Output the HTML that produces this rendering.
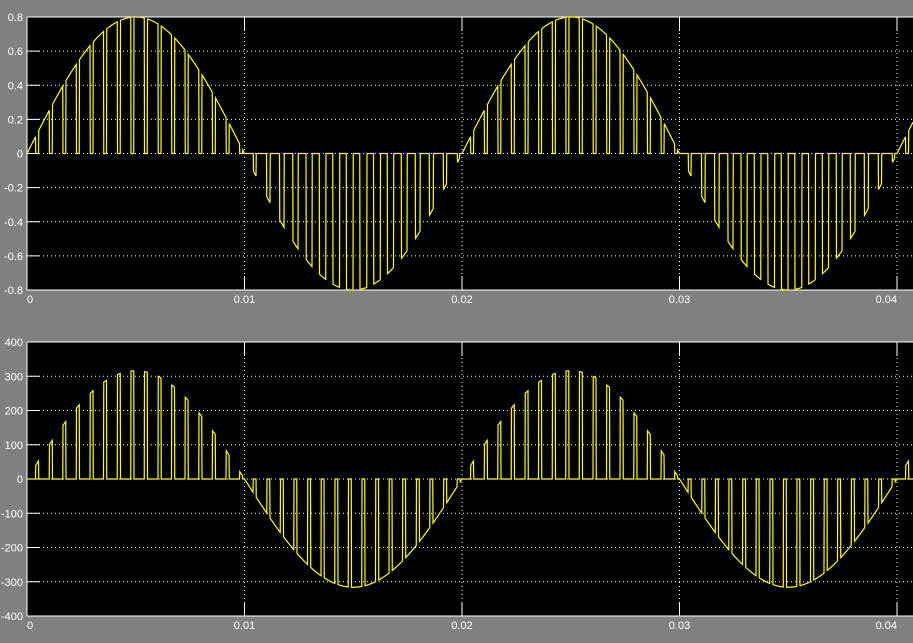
<!DOCTYPE html>
<html><head><meta charset="utf-8"><style>
html,body{margin:0;padding:0;background:#808080;width:913px;height:643px;overflow:hidden}
svg{display:block}
text{font-family:"Liberation Sans",sans-serif;font-size:11px;fill:#fff}
</style></head><body>
<svg id="s" width="913" height="643" xmlns="http://www.w3.org/2000/svg">
<rect x="0" y="0" width="913" height="643" fill="#808080"/>
<rect x="27" y="17" width="890" height="273" fill="#000"/>
<rect x="27" y="342" width="890" height="274" fill="#000"/>
<g id="g"></g>
</svg>
<script>
var g=document.getElementById('g'),NS='http://www.w3.org/2000/svg';
function el(t,a,txt){var e=document.createElementNS(NS,t);for(var k in a)e.setAttribute(k,a[k]);if(txt!=null)e.textContent=txt;g.appendChild(e);return e;}
function axes(top,bot,labels){
  var n=labels.length;
  for(var i=0;i<n;i++){var y=top+(bot-top)*i/(n-1);
    if(i>0&&i<n-1)el('line',{x1:27,y1:y,x2:913,y2:y,stroke:'#fff','stroke-width':1,'stroke-dasharray':'1,3'});
    el('line',{x1:27,y1:y,x2:40,y2:y,stroke:'#fff'});
    el('text',{x:23,y:y+4,'text-anchor':'end'},labels[i]);}
  var xl=['0','0.01','0.02','0.03','0.04'];
  for(var j=0;j<5;j++){var x=27+j*217.5;
    if(j>0)el('line',{x1:x,y1:top,x2:x,y2:bot,stroke:'#fff','stroke-dasharray':'1,3'});
    el('line',{x1:x,y1:bot,x2:x,y2:bot-14,stroke:'#fff'});
    el('line',{x1:x,y1:top,x2:x,y2:top+14,stroke:'#fff'});
    el('text',{x:x,y:bot+13,'text-anchor':j==0?'start':(j==4?'end':'middle')},xl[j]);}
  el('line',{x1:27,y1:top,x2:913,y2:top,stroke:'#fff'});
  el('line',{x1:27,y1:bot,x2:913,y2:bot,stroke:'#fff'});
  el('line',{x1:27,y1:top,x2:27,y2:bot,stroke:'#fff'});
}
axes(17,290,['0.8','0.6','0.4','0.2','0','-0.2','-0.4','-0.6','-0.8']);
axes(342,616,['400','300','200','100','0','-100','-200','-300','-400']);
var P=217.5/16;
function wave(top,bot,mode,amp){
  var mid=(top+bot)/2,A=(bot-top)/2*amp,pts=[];
  for(var x=27;x<=913;x+=0.25){
    var s=Math.sin((x-27)/435*2*Math.PI);
    var k=Math.floor((x-27)/P),c=27+(k+0.75)*P;
    var d=Math.abs(x-c),v;
    var pos=s>=0;
    if(mode==0){ if(pos) v=d<1.5?0:s; else {var w=1+2.5*Math.abs(s);v=d<w?s:0;} }
    else { if(pos) v=d<1.5?s:0; else v=d<1.5?0:s; }
    pts.push(x.toFixed(2)+','+(mid-v*A).toFixed(2));
  }
  el('polyline',{points:pts.join(' '),fill:'none',stroke:'#ffff00','stroke-width':1.2});
}
wave(17,290,0,1);wave(342,616,1,0.79);
</script>
</body></html>
